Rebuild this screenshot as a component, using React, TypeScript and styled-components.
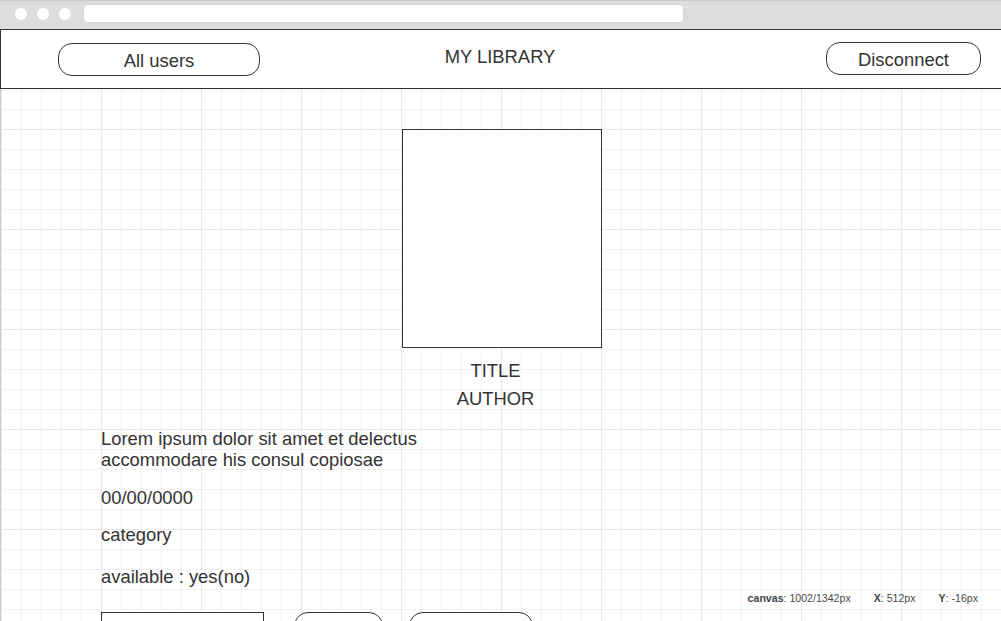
import React from "react";
import styled, { createGlobalStyle } from "styled-components";

const GlobalStyle = createGlobalStyle`
  html, body {
    margin: 0;
    padding: 0;
    background: #ffffff;
  }
  body {
    font-family: "Liberation Sans", Arial, sans-serif;
    color: #333333;
  }
  * { box-sizing: border-box; }
`;

const Page = styled.div`
  position: relative;
  width: 1001px;
  height: 621px;
  overflow: hidden;
  display: flex;
  flex-direction: column;
`;

const ChromeBar = styled.div`
  height: 29px;
  flex: none;
  background: #dddddd;
  border-top: 1px solid #cbcbcb;
  display: flex;
  align-items: flex-start;
  padding: 3px 0 0 15px;
`;

const Dot = styled.span`
  width: 12px;
  height: 12px;
  margin-top: 4px;
  margin-right: 10px;
  border-radius: 50%;
  background: #ffffff;
`;

const AddressBar = styled.div`
  width: 601px;
  height: 19px;
  margin-left: 2px;
  background: #ffffff;
  border: 1px solid #d4d4d4;
  border-radius: 4px;
`;

const Header = styled.header`
  height: 60px;
  flex: none;
  display: flex;
  align-items: flex-start;
  border-top: 1px solid #333333;
  border-bottom: 1px solid #333333;
  border-left: 1px solid #333333;
  background: #ffffff;
`;

const LeftSlot = styled.div`
  width: 399px;
  padding: 13px 0 0 57px;
`;

const Title = styled.div`
  width: 200px;
  padding-top: 16px;
  text-align: center;
  font-size: 18.4px;
  line-height: 21px;
  color: #333333;
`;

const RightSlot = styled.div`
  flex: 1;
  display: flex;
  justify-content: flex-end;
  padding: 12px 20px 0 0;
`;

const Pill = styled.div<{ $w: number; $ml?: number }>`
  width: ${(p) => p.$w}px;
  height: 33px;
  flex: none;
  margin-left: ${(p) => p.$ml ?? 0}px;
  padding-top: 2px;
  border: 1px solid #333333;
  border-radius: 14px;
  background: #ffffff;
  font-size: 18.4px;
  line-height: 29px;
  text-align: center;
  color: #333333;
`;

const Canvas = styled.main`
  flex: 1;
  border-left: 1px solid #cccccc;
  padding-top: 40px;
  display: flex;
  flex-direction: column;
  background-color: #ffffff;
  background-image:
    linear-gradient(to right, #e8e8e8 1px, transparent 1px),
    linear-gradient(to bottom, #e8e8e8 1px, transparent 1px),
    linear-gradient(to right, #f2f2f2 1px, transparent 1px),
    linear-gradient(to bottom, #f2f2f2 1px, transparent 1px);
  background-size: 100px 100px, 100px 100px, 20px 20px, 20px 20px;
  background-position: 0 0, 0 40px, 0 0, 0 0;
`;

const Cover = styled.div`
  width: 200px;
  height: 219px;
  margin-left: 401px;
  border: 1px solid #333333;
  background: #ffffff;
`;

const Caption = styled.div`
  width: 200px;
  margin: 9px 0 0 401px;
  padding-right: 13px;
  text-align: center;
  font-size: 18.4px;
  line-height: 28px;
  color: #333333;
`;

const Details = styled.section`
  margin: 15px 0 0 100px;
  display: flex;
  flex-direction: column;
`;

const Line = styled.p<{ $mt?: number }>`
  margin: ${(p) => p.$mt ?? 0}px 0 0 0;
  font-size: 18.4px;
  line-height: 21px;
  color: #333333;
`;

const Actions = styled.div`
  display: flex;
  align-items: flex-start;
  margin: 25px 0 0 100px;
`;

const InputBox = styled.div`
  width: 163px;
  height: 40px;
  border: 1px solid #333333;
  background: #ffffff;
`;

const Status = styled.div`
  position: absolute;
  top: 592px;
  right: 23px;
  display: flex;
  gap: 23px;
  font-size: 10.6px;
  line-height: 13px;
  color: #4a4a4a;
`;

const StatusKey = styled.b`
  font-weight: bold;
  color: #444444;
`;

export default function App() {
  return (
    <>
      <GlobalStyle />
      <Page>
        <ChromeBar>
          <Dot />
          <Dot />
          <Dot />
          <AddressBar />
        </ChromeBar>
        <Header>
          <LeftSlot>
            <Pill $w={202}>All users</Pill>
          </LeftSlot>
          <Title>MY LIBRARY</Title>
          <RightSlot>
            <Pill $w={155}>Disconnect</Pill>
          </RightSlot>
        </Header>
        <Canvas>
          <Cover />
          <Caption>
            TITLE
            <br />
            AUTHOR
          </Caption>
          <Details>
            <Line>
              Lorem ipsum dolor sit amet et delectus
              <br />
              accommodare his consul copiosae
            </Line>
            <Line $mt={17}>00/00/0000</Line>
            <Line $mt={16}>category</Line>
            <Line $mt={21}>available : yes(no)</Line>
          </Details>
          <Actions>
            <InputBox />
            <Pill $w={89} $ml={30} />
            <Pill $w={124} $ml={26} />
          </Actions>
        </Canvas>
        <Status>
          <span>
            <StatusKey>canvas</StatusKey>: 1002/1342px
          </span>
          <span>
            <StatusKey>X</StatusKey>: 512px
          </span>
          <span>
            <StatusKey>Y</StatusKey>: -16px
          </span>
        </Status>
      </Page>
    </>
  );
}
